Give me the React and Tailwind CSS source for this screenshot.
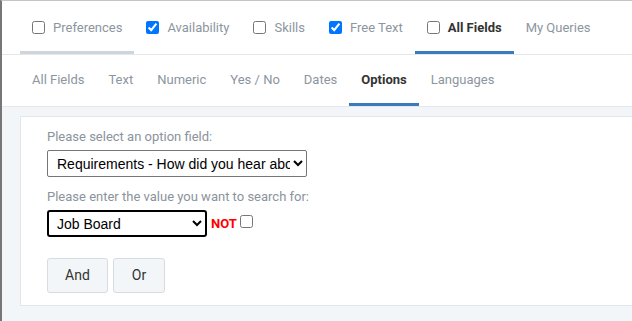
import { useState } from "react"

const topTabs = [
  { label: "Preferences", checked: false, line: "gray" },
  { label: "Availability", checked: true },
  { label: "Skills", checked: false },
  { label: "Free Text", checked: true },
  { label: "All Fields", checked: false, active: true },
  { label: "My Queries", noBox: true },
]

const subTabs = ["All Fields", "Text", "Numeric", "Yes / No", "Dates", "Options", "Languages"]

export default function App() {
  const [field, setField] = useState("req")
  const [value, setValue] = useState("job")

  return (
    <div className="w-[632px] h-[321px] overflow-hidden bg-[#f3f6f9] border-l-2 border-l-[#777] border-t border-t-[#c4c4c4] font-['Roboto',sans-serif]">
      <div className="flex bg-white pl-[18px] border-b border-[#e5e8eb]">
        {topTabs.map(t => (
          <div
            key={t.label}
            className={
              "flex items-center h-[53px] pt-[3px] px-3 border-b-[3px] text-[13px] " +
              (t.active ? "border-[#3a7bbf] text-[#333] font-bold" : t.line === "gray" ? "border-[#cdd5dd] text-[#8c96a0]" : "border-transparent text-[#8c96a0]")
            }
          >
            {!t.noBox && (
              <input type="checkbox" defaultChecked={t.checked} className="w-[13px] h-[13px] m-0 mr-2" />
            )}
            {t.label}
          </div>
        ))}
      </div>

      <div className="flex bg-white pl-[18px] border-b border-[#e5e8eb]">
        {subTabs.map(t => (
          <div
            key={t}
            className={
              "flex items-center h-[51px] pt-[2px] px-3 border-b-[3px] text-[13px] " +
              (t === "Options" ? "border-[#3a7bbf] text-[#333] font-bold" : "border-transparent text-[#8c96a0]")
            }
          >
            {t}
          </div>
        ))}
      </div>

      <div className="pl-[18px] pt-[9px]">
        <div className="w-[640px] h-[190px] bg-white border border-[#e3e7eb] pl-[26px] pt-[12px]">
          <div className="text-[13px] text-[#8b939c] leading-[16px]">Please select an option field:</div>
          <select
            value={field}
            onChange={e => setField(e.target.value)}
            className="mt-[5px] w-[260px] h-[27px] border border-[#767676] rounded-[2px] pl-[5px] text-[14px] text-black bg-white font-['Liberation_Sans',sans-serif]"
          >
            <option value="req">Requirements - How did you hear about us?</option>
          </select>
          <div className="mt-[12px] text-[13px] text-[#8b939c] leading-[16px]">Please enter the value you want to search for:</div>
          <div className="flex items-center mt-[5px]">
            <select
              value={value}
              onChange={e => setValue(e.target.value)}
              className="w-[160px] h-[27px] border-2 border-black rounded-[3px] pl-[4px] text-[14px] text-black bg-white font-['Liberation_Sans',sans-serif]"
            >
              <option value="job">Job Board</option>
            </select>
            <span className="ml-[4px] text-[13px] font-bold text-[#f00]">NOT</span>
            <input type="checkbox" className="w-[13px] h-[13px] m-0 ml-[3px] -mt-[5px]" />
          </div>
          <div className="flex gap-[5px] mt-[21px]">
            <button className="w-[61px] h-[35px] bg-[#f3f6f9] border border-[#d6dce2] rounded-[3px] text-[14px] text-[#333]">And</button>
            <button className="w-[52px] h-[35px] bg-[#f3f6f9] border border-[#d6dce2] rounded-[3px] text-[14px] text-[#333]">Or</button>
          </div>
        </div>
      </div>
    </div>
  )
}
